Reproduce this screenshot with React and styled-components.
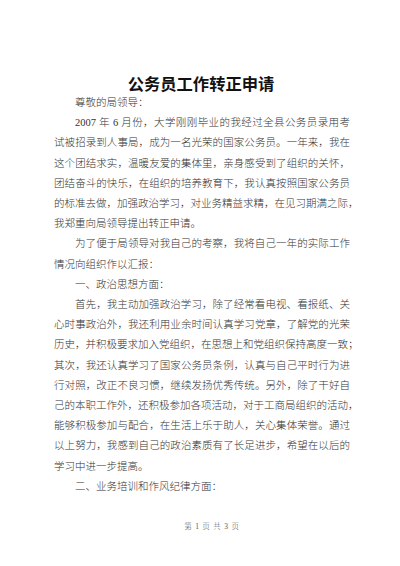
import React from "react";
import styled, { createGlobalStyle } from "styled-components";

const Global = createGlobalStyle`
  html, body { margin: 0; padding: 0; background: #fff; }
  body { width: 400px; height: 566px; overflow: hidden; }
`;

const Page = styled.div`
  width: 400px;
  height: 566px;
  box-sizing: border-box;
  padding: 73px 50px 0 54px;
  display: flex;
  flex-direction: column;
  font-family: "Liberation Serif", "Noto Sans CJK SC", serif;
  color: #333;
`;

const Title = styled.h1`
  margin: 0;
  height: 20px;
  line-height: 20px;
  text-align: center;
  font-family: "Noto Sans CJK SC", sans-serif;
  font-weight: 700;
  font-size: 16.3px;
  color: #111;
  padding-right: 2px;
`;

const Body = styled.div`
  display: flex;
  flex-direction: column;
  font-size: 10.5px;
  line-height: 20.2px;
  font-weight: 300;
`;

const Para = styled.p`
  margin: 0;
`;

const Line = styled.span`
  display: block;
  white-space: nowrap;
  text-align: justify;
  text-align-last: ${(p) => (p.$last ? "left" : "justify")};
  padding-left: ${(p) => (p.$indent ? "21px" : "0")};
`;

const Footer = styled.div`
  margin-top: auto;
  margin-bottom: 34px;
  padding-left: 20px;
  text-align: center;
  font-size: 7.5px;
  line-height: 10px;
  letter-spacing: 0.8px;
  color: #555;
  font-weight: 300;
`;

const paragraphs = [
  ["尊敬的局领导："],
  [
    "2007 年 6 月份，大学刚刚毕业的我经过全县公务员录用考",
    "试被招录到人事局，成为一名光荣的国家公务员。一年来，我在",
    "这个团结求实，温暖友爱的集体里，亲身感受到了组织的关怀，",
    "团结奋斗的快乐，在组织的培养教育下，我认真按照国家公务员",
    "的标准去做，加强政治学习，对业务精益求精，在见习期满之际，",
    "我郑重向局领导提出转正申请。",
  ],
  [
    "为了便于局领导对我自己的考察，我将自己一年的实际工作",
    "情况向组织作以汇报：",
  ],
  ["一、政治思想方面："],
  [
    "首先，我主动加强政治学习，除了经常看电视、看报纸、关",
    "心时事政治外，我还利用业余时间认真学习党章，了解党的光荣",
    "历史，并积极要求加入党组织，在思想上和党组织保持高度一致；",
    "其次，我还认真学习了国家公务员条例，认真与自己平时行为进",
    "行对照，改正不良习惯，继续发扬优秀传统。另外，除了干好自",
    "己的本职工作外，还积极参加各项活动，对于工商局组织的活动，",
    "能够积极参加与配合，在生活上乐于助人，关心集体荣誉。通过",
    "以上努力，我感到自己的政治素质有了长足进步，希望在以后的",
    "学习中进一步提高。",
  ],
  ["二、业务培训和作风纪律方面："],
];

export default function App() {
  return (
    <>
      <Global />
      <Page>
        <Title>公务员工作转正申请</Title>
        <Body>
          {paragraphs.map((lines, i) => (
            <Para key={i}>
              {lines.map((t, j) => (
                <Line key={j} $indent={j === 0} $last={j === lines.length - 1}>
                  {t}
                </Line>
              ))}
            </Para>
          ))}
        </Body>
        <Footer>第 1 页 共 3 页</Footer>
      </Page>
    </>
  );
}
